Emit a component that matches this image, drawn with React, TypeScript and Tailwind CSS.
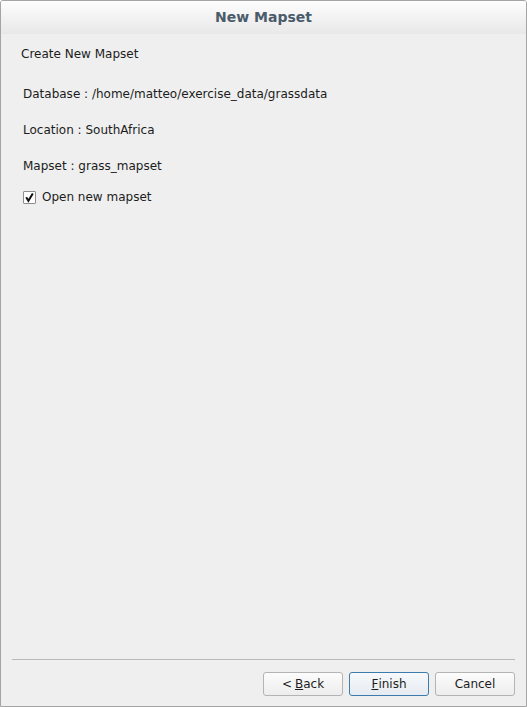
import React from "react";

const font = { fontFamily: '"DejaVu Sans", "Liberation Sans", sans-serif' };

function Btn({ children, primary }: { children: React.ReactNode; primary?: boolean }) {
  return (
    <div
      className={
        "w-[80px] h-[24px] flex items-center justify-center rounded-[3px] border text-[12px] text-[#1d1d1d] " +
        (primary
          ? "border-[#3c7bab] bg-gradient-to-b from-[#f7f9fb] to-[#e5ebf1]"
          : "border-[#b4b4b4] bg-gradient-to-b from-[#fcfcfc] to-[#ededed]")
      }
    >
      {children}
    </div>
  );
}

export default function App() {
  return (
    <div style={font} className="w-[527px] h-[707px] flex flex-col bg-[#efefef] border border-[#a4a4a4] rounded-t-[3px] overflow-hidden">
      <div className="h-[33px] shrink-0 flex items-center justify-center bg-gradient-to-b from-[#fdfdfd] to-[#e8e8e8]">
        <span className="text-[14px] font-bold text-[#4a5b6b]">New Mapset</span>
      </div>
      <div className="flex-1 flex flex-col pl-[20px] text-[12px] text-[#1c1c1c]">
        <div className="mt-[12px] h-4 leading-4">Create New Mapset</div>
        <div className="mt-[24px] ml-[2px] h-4 leading-4">Database : /home/matteo/exercise_data/grassdata</div>
        <div className="mt-[20px] ml-[2px] h-4 leading-4">Location : SouthAfrica</div>
        <div className="mt-[20px] ml-[2px] h-4 leading-4">Mapset : grass_mapset</div>
        <div className="mt-[15px] ml-[2px] h-4 flex items-center gap-[6px]">
          <div className="w-[13px] h-[13px] bg-white border border-[#8e8e8e] rounded-[1px] flex items-center justify-center">
            <svg width="11" height="11" viewBox="0 0 11 11">
              <path d="M2.2 5.2 L4.4 8.8 L8.8 1.4" fill="none" stroke="#111" strokeWidth="2" />
            </svg>
          </div>
          <span className="leading-4">Open new mapset</span>
        </div>
      </div>
      <div className="mx-[11px] h-px bg-[#b8b8b8]" />
      <div className="flex justify-end gap-[6px] pr-[11px] pt-[12px] pb-[10px]">
        <Btn>
          &lt; <span className="underline ml-[3px]">B</span>ack
        </Btn>
        <Btn primary>
          <span className="underline">F</span>inish
        </Btn>
        <Btn>Cancel</Btn>
      </div>
    </div>
  );
}
